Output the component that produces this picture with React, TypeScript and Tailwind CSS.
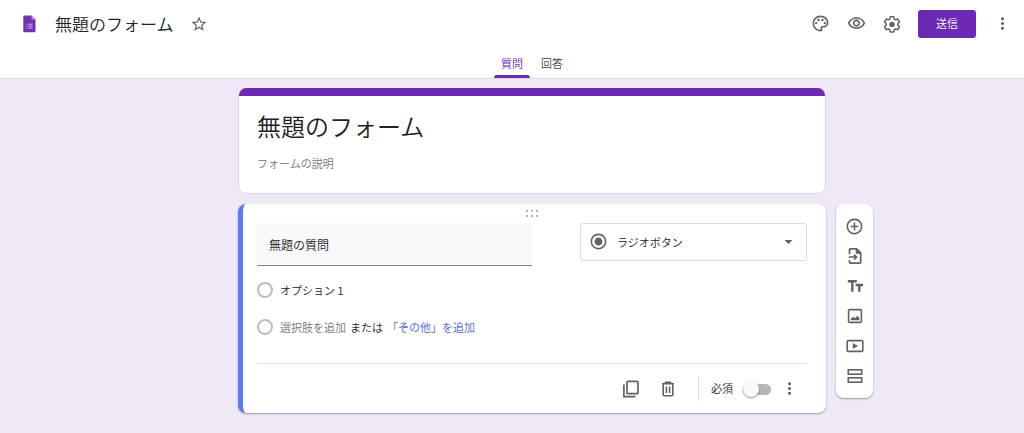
import { type ReactNode, useState } from 'react';
import {
  MdAddCircleOutline,
  MdArrowDropDown,
  MdMoreVert,
  MdOutlinePalette,
  MdOutlineVisibility,
  MdRadioButtonChecked,
  MdStarBorder,
} from 'react-icons/md';

interface IconButtonProps {
  label: string;
  className?: string;
  children: ReactNode;
}

function IconButton({ label, className = 'size-6', children }: IconButtonProps) {
  return (
    <button type="button" aria-label={label} className={`flex shrink-0 items-center justify-center text-[#5f6368] ${className}`}>
      {children}
    </button>
  );
}

function FormsLogo() {
  return (
    <svg width="13" height="18" viewBox="0 0 13 18" aria-hidden="true">
      <path d="M1.2 0.5H8.5L12.5 4.5V16a1.2 1.2 0 0 1-1.2 1.2H1.5A1.2 1.2 0 0 1 0.3 16V1.7A1.2 1.2 0 0 1 1.5 0.5z" fill="#7131b8" />
      <path d="M8.5 0.5L12.5 4.5H8.5z" fill="#b793dd" />
      <path d="M3.3 9.2h1M3.3 11.2h1M3.3 13.2h1M5.3 9.2h4.2M5.3 11.2h4.2M5.3 13.2h4.2" stroke="#cdb3ea" strokeWidth="1" />
    </svg>
  );
}

function GearIcon() {
  return (
    <svg width="18" height="18" viewBox="0 0 24 24" fill="none" stroke="currentColor" strokeWidth="2" strokeLinejoin="round" aria-hidden="true">
      <path d="M9.7 2.2h4.6l.7 3.2 1.7 1 3.1-1 2.3 4-2.4 2.2v1.8l2.4 2.2-2.3 4-3.1-1-1.7 1-.7 3.2H9.7L9 19.6l-1.7-1-3.1 1-2.3-4 2.4-2.2v-1.8L1.9 9.4l2.3-4 3.1 1 1.7-1z" />
      <circle cx="12" cy="12.5" r="3.6" fill="currentColor" stroke="none" />
    </svg>
  );
}

function CopyIcon() {
  return (
    <svg width="18" height="18" viewBox="0 0 18 18" fill="none" stroke="currentColor" strokeWidth="1.7" aria-hidden="true">
      <rect x="5" y="1.3" width="11" height="12.4" rx="1" />
      <path d="M1.9 4.6v12h11.6" />
    </svg>
  );
}

function TrashIcon() {
  return (
    <svg width="18" height="18" viewBox="0 0 18 18" fill="none" stroke="currentColor" strokeWidth="1.6" aria-hidden="true">
      <path d="M3 3.8h12M6.5 3.2V2.2h5v1" />
      <path d="M4.2 4v10.7c0 .6.4 1 1 1h7.6c.6 0 1-.4 1-1V4M7.4 6.5v6.6M10.6 6.5v6.6" />
    </svg>
  );
}

function ImportIcon() {
  return (
    <svg width="18" height="18" viewBox="0 0 18 18" fill="none" stroke="currentColor" strokeWidth="1.7" aria-hidden="true">
      <path d="M3.5 7.3V2.7c0-.5.4-.9.9-.9h6.2l4.1 4.1v9.4c0 .5-.4.9-.9.9H4.4c-.5 0-.9-.4-.9-.9v-2.4" />
      <path d="M10.2 1.8v4.5h4.5z" fill="currentColor" strokeWidth="1" />
      <path d="M2.7 10.1h7.6M8 7.6l2.6 2.5L8 12.6" strokeWidth="1.5" />
    </svg>
  );
}

function TitleIcon() {
  return (
    <svg width="18" height="18" viewBox="0 0 18 18" fill="none" stroke="currentColor" strokeWidth="2.4" aria-hidden="true">
      <path d="M1.8 4.2h9M6.3 4.2v10.6M9.6 8h7.4M13.3 8v6.8" />
    </svg>
  );
}

function ImageIcon() {
  return (
    <svg width="18" height="18" viewBox="0 0 18 18" aria-hidden="true">
      <rect x="2.6" y="2.6" width="12.8" height="12.8" rx="1" fill="none" stroke="currentColor" strokeWidth="1.6" />
      <path d="M4.8 13.2v-1.4l2.2-2 1.8 1.5 2.6-2.5 2 2.4v2z" fill="currentColor" />
    </svg>
  );
}

function VideoIcon() {
  return (
    <svg width="18" height="18" viewBox="0 0 18 18" aria-hidden="true">
      <rect x="1.2" y="3.6" width="15.6" height="10.8" rx="1" fill="none" stroke="currentColor" strokeWidth="1.6" />
      <path d="M6.8 6v6L12 9z" fill="currentColor" />
    </svg>
  );
}

function SectionIcon() {
  return (
    <svg width="18" height="18" viewBox="0 0 18 18" fill="none" stroke="currentColor" strokeWidth="1.6" aria-hidden="true">
      <rect x="2.3" y="2.8" width="13.4" height="4.4" />
      <rect x="2.3" y="10.8" width="13.4" height="4.4" />
    </svg>
  );
}

const tools = [
  { label: '質問を追加', icon: <MdAddCircleOutline size={19} /> },
  { label: '質問をインポート', icon: <ImportIcon /> },
  { label: 'タイトルと説明を追加', icon: <TitleIcon /> },
  { label: '画像を追加', icon: <ImageIcon /> },
  { label: '動画を追加', icon: <VideoIcon /> },
  { label: 'セクションを追加', icon: <SectionIcon /> },
];

const radioCls = 'size-4 shrink-0 appearance-none rounded-full border-2 border-[#bdbdbd]';

function Header() {
  return (
    <header className="border-b border-[#dddae2] bg-white">
      <div className="flex h-[47px] items-center pr-2.5 pl-[23px]">
        <FormsLogo />
        <input
          aria-label="フォーム名"
          defaultValue="無題のフォーム"
          className="ml-[19px] w-[120px] text-[17px] leading-6 text-[#202124] outline-none"
        />
        <IconButton label="スター" className="ml-3 size-6"><MdStarBorder size={18} /></IconButton>
        <div className="ml-auto flex items-center gap-3">
          <IconButton label="テーマをカスタマイズ"><MdOutlinePalette size={19} /></IconButton>
          <IconButton label="プレビュー"><MdOutlineVisibility size={19} /></IconButton>
          <IconButton label="設定"><GearIcon /></IconButton>
          <button type="button" className="mx-0.5 h-7 w-[58px] rounded-[3px] bg-[#6c29b3] text-[11px] text-white">
            送信
          </button>
          <IconButton label="その他"><MdMoreVert size={19} /></IconButton>
        </div>
      </div>
      <nav className="flex h-[31px] justify-center gap-1 pl-10 text-[11px]">
        <a href="#questions" className="flex w-9 flex-col items-center justify-end text-[#6c29b3]">
          <span className="pb-1 leading-4">質問</span>
          <span className="h-[3px] w-full rounded-t-[3px] bg-[#6c29b3]" />
        </a>
        <a href="#responses" className="flex w-9 flex-col items-center justify-end text-[#444]">
          <span className="pb-[7px] leading-4">回答</span>
        </a>
      </nav>
    </header>
  );
}

function TitleCard() {
  return (
    <section className="overflow-hidden rounded-lg border border-t-0 border-[#dedae4] bg-white">
      <div className="h-2 bg-[#6c29b3]" />
      <div className="px-[18px] pt-3 pb-[22px]">
        <input
          aria-label="フォームのタイトル"
          defaultValue="無題のフォーム"
          className="block w-full text-2xl leading-9 text-[#202124] outline-none"
        />
        <input
          aria-label="フォームの説明"
          placeholder="フォームの説明"
          className="mt-[11px] block w-full text-[11px] leading-4 outline-none placeholder:text-[#757575]"
        />
      </div>
    </section>
  );
}

function QuestionCard() {
  const [required, setRequired] = useState(false);

  return (
    <section className="overflow-hidden rounded-lg border-l-[5px] border-[#5b7cf0] bg-white pr-[19px] pl-3.5 shadow-[0_1px_2px_rgba(0,0,0,0.35)]">
      <div className="flex h-[19px] items-center justify-center">
        <svg width="12" height="7" viewBox="0 0 12 7" fill="#b3b3b3" aria-hidden="true">
          <path d="M0 0h2v2H0zM5 0h2v2H5zM10 0h2v2h-2zM0 5h2v2H0zM5 5h2v2H5zM10 5h2v2h-2z" />
        </svg>
      </div>

      <div className="flex items-start justify-between">
        <input
          aria-label="質問"
          defaultValue="無題の質問"
          className="h-[43px] w-1/2 border-b border-[#85868c] bg-[#f8f9fa] px-3 text-xs text-[#202124] outline-none"
        />
        <div className="relative w-[227px]">
          <select
            aria-label="質問の形式"
            className="h-[38px] w-full appearance-none rounded-[3px] border border-[#dadce0] bg-white pl-9 text-[11px] text-[#202124] outline-none"
          >
            <option>ラジオボタン</option>
            <option>チェックボックス</option>
            <option>プルダウン</option>
          </select>
          <MdRadioButtonChecked size={19} className="pointer-events-none absolute top-[9px] left-[9px] text-[#5f6368]" />
          <MdArrowDropDown size={19} className="pointer-events-none absolute top-[9px] right-[9px] text-[#5f6368]" />
        </div>
      </div>

      <div className="mt-[15px] flex h-[18px] items-center gap-[7px] text-[11px] text-[#202124]">
        <input type="radio" name="option" aria-label="オプション 1" className={radioCls} />
        <input aria-label="選択肢" defaultValue="オプション 1" className="w-full outline-none" />
      </div>
      <div className="mt-[19px] flex h-[18px] items-center text-[11px] text-[#202124]">
        <input type="radio" name="option" aria-label="新しい選択肢" className={radioCls} />
        <button type="button" className="ml-[7px] text-[#757575]">選択肢を追加</button>
        <span className="ml-1">または</span>
        <button type="button" className="ml-1 text-[#4a63e0]">「その他」を追加</button>
      </div>

      <div className="mt-[27px] flex h-[50px] items-center justify-end border-t border-[#e0e0e0] pr-1.5">
        <IconButton label="コピーを作成"><CopyIcon /></IconButton>
        <IconButton label="削除" className="ml-[13px] size-6"><TrashIcon /></IconButton>
        <div className="ml-[18px] h-[25px] border-l border-[#dcdcdc]" />
        <label className="ml-3 flex items-center gap-2.5 text-[11px] text-[#202124]">
          必須
          <input
            type="checkbox"
            role="switch"
            checked={required}
            onChange={e => setRequired(e.target.checked)}
            className="relative h-4 w-7 appearance-none before:absolute before:inset-x-0 before:top-[3px] before:h-[11px] before:rounded-full before:bg-[#b5b5b5] after:absolute after:top-0 after:left-0 after:size-4 after:rounded-full after:bg-[#fafafa] after:shadow-[0_1px_2px_rgba(0,0,0,0.4)] checked:before:bg-[#b794dd] checked:after:left-3 checked:after:bg-[#6c29b3]"
          />
        </label>
        <IconButton label="その他のオプション" className="ml-1.5 size-6"><MdMoreVert size={19} /></IconButton>
      </div>
    </section>
  );
}

export default function App() {
  return (
    <div className="min-h-screen bg-[#efe9f7] font-['Noto_Sans_CJK_JP',sans-serif] font-[350]">
      <Header />
      <main className="flex justify-center gap-2.5 pt-[9px] pb-5 pl-[87px]">
        <div className="flex w-full max-w-[588px] flex-col gap-2.5">
          <TitleCard />
          <QuestionCard />
        </div>
        <aside className="mt-[116px] flex w-[37px] flex-col self-start rounded-lg bg-white py-[7px] shadow-[0_1px_2px_rgba(0,0,0,0.35)]">
          {tools.map(tool => (
            <IconButton key={tool.label} label={tool.label} className="h-[30px] w-full">{tool.icon}</IconButton>
          ))}
        </aside>
      </main>
    </div>
  );
}
